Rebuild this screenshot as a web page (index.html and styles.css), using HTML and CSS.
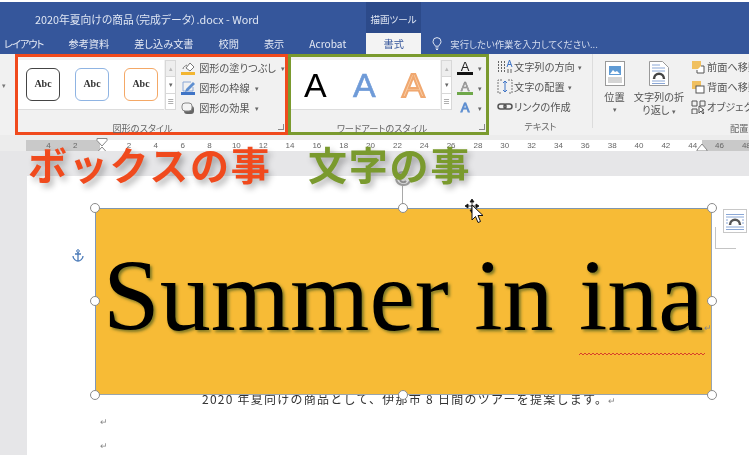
FILE: index.html
```html
<!DOCTYPE html>
<html lang="ja">
<head>
    <meta charset="UTF-8">
    <title>2020年夏向けの商品（完成データ）.docx - Word</title>
    <link rel="stylesheet" href="styles.css">
</head>
<body>
    <div class="window">
        <div class="titlebar">
            <div class="doc-title">2020年夏向けの商品（完成データ）.docx - Word</div>
            <div class="tool-tab">描画ツール</div>
        </div>
        <div class="tabs">
            <span class="tab-first">レイアウト</span>
            <span>参考資料</span>
            <span>差し込み文書</span>
            <span>校閲</span>
            <span>表示</span>
            <span>Acrobat</span>
            <span class="tab-active">書式</span>
            <span class="tell-me">
                <svg width="10" height="13" viewBox="0 0 10 13"><path d="M3.3 9.2C3 7.6 1 6.800 1 4.600a4 4 0 0 1 8 0c0 2.200-2 3-2.300 4.600zM3.500 11h3M4 12.500h2" fill="none" stroke="#dfe6f3" stroke-width="1"/></svg>
                実行したい作業を入力してください...
            </span>
        </div>

        <div class="ribbon">
            <div class="ribbon-left">▾</div>

            <div class="group group-red">
                <div class="group-body">
                    <div class="gallery shape-gallery">
                        <div class="abc abc-black">Abc</div>
                        <div class="abc abc-blue">Abc</div>
                        <div class="abc abc-orange">Abc</div>
                    </div>
                    <div class="gallery-scroll"><i>▴</i><i>▾</i><i>≡</i></div>
                    <div class="commands">
                        <div class="cmd">
                            <svg width="15" height="14" viewBox="0 0 15 14"><path d="M5 7l4-5 4 4-4 4z" fill="#fff" stroke="#777"/><path d="M2 8c0-2 2-3 4-4" fill="none" stroke="#777"/><rect x="0" y="11" width="14" height="3" fill="#f3b632"/></svg>
                            図形の塗りつぶし <em>▾</em>
                        </div>
                        <div class="cmd">
                            <svg width="15" height="14" viewBox="0 0 15 14"><path d="M2 1h8M2 1v9h10V6" fill="none" stroke="#8aa7d6"/><path d="M5 8l7-7 2 2-7 7-3 1z" fill="#5f8fd0"/><rect x="0" y="11" width="14" height="3" fill="#3f74c6"/></svg>
                            図形の枠線 <em>▾</em>
                        </div>
                        <div class="cmd">
                            <svg width="15" height="14" viewBox="0 0 15 14"><rect x="3" y="5" width="10" height="8" rx="3" fill="#666"/><rect x="1" y="2" width="10" height="8" rx="3" fill="#f4f4f4" stroke="#888"/></svg>
                            図形の効果 <em>▾</em>
                        </div>
                    </div>
                </div>
                <div class="group-label">図形のスタイル</div>
                <span class="launcher"></span>
            </div>

            <div class="group group-green">
                <div class="group-body">
                    <div class="gallery art-gallery">
                        <span class="art art-black">A</span>
                        <span class="art art-blue">A</span>
                        <span class="art art-orange">A</span>
                    </div>
                    <div class="gallery-scroll"><i>▴</i><i>▾</i><i>≡</i></div>
                    <div class="commands art-commands">
                        <div class="cmd"><span class="letter letter-black">A</span><em>▾</em></div>
                        <div class="cmd"><span class="letter letter-green">A</span><em>▾</em></div>
                        <div class="cmd"><span class="letter letter-blue">A</span><em>▾</em></div>
                    </div>
                </div>
                <div class="group-label">ワードアートのスタイル</div>
                <span class="launcher"></span>
            </div>

            <div class="group group-text">
                <div class="commands">
                    <div class="cmd">
                        <svg width="16" height="15" viewBox="0 0 16 15"><path d="M1.500 2v11M4.500 2v11M7.500 2v11" stroke="#666" stroke-dasharray="2 1"/><path d="M10 8l2.500-7L15 8M11 5.500h3" fill="none" stroke="#3f74c6"/><path d="M11 10v4M14 10v4" stroke="#666"/></svg>
                        文字列の方向 <em>▾</em>
                    </div>
                    <div class="cmd">
                        <svg width="16" height="15" viewBox="0 0 16 15"><path d="M5 1H1v13h4M11 1h4v13h-4" fill="none" stroke="#777" stroke-dasharray="2 1"/><path d="M8 2v11M6 4l2-2 2 2M6 11l2 2 2-2" fill="none" stroke="#3f74c6"/></svg>
                        文字の配置 <em>▾</em>
                    </div>
                    <div class="cmd">
                        <svg width="16" height="15" viewBox="0 0 16 15"><rect x="1" y="5" width="8" height="5" rx="2.500" fill="none" stroke="#555" stroke-width="1.500"/><rect x="7" y="5" width="8" height="5" rx="2.500" fill="none" stroke="#555" stroke-width="1.500"/></svg>
                        リンクの作成
                    </div>
                </div>
                <div class="group-label">テキスト</div>
            </div>

            <div class="group group-arrange">
                <div class="arrange-body">
                    <div class="big-btn btn-position">
                        <svg width="20" height="25" viewBox="0 0 20 25"><rect x=".5" y=".5" width="19" height="24" fill="#fff" stroke="#999"/><rect x="4" y="5" width="12" height="9" fill="#5f9bd5"/><path d="M5 13l3-4 2 2 2-1 3 3z" fill="#fff"/><path d="M3 17h14M3 19h14M3 21h14" stroke="#aaa"/></svg>
                        <div>位置</div>
                        <em>▾</em>
                    </div>
                    <div class="big-btn btn-wrap">
                        <svg width="20" height="25" viewBox="0 0 20 25"><path d="M.5.500h13l6 6v18H.5z" fill="#fff" stroke="#999"/><path d="M3 4h8M3 7h13M3 10h13M3 20h13M3 22.500h13" stroke="#8aa7d6"/><path d="M5 18c0-7 10-7 10 0" fill="none" stroke="#444" stroke-width="2.500"/></svg>
                        <div>文字列の折<br>り返し <em>▾</em></div>
                    </div>
                    <div class="commands arrange-commands">
                        <div class="cmd">
                            <svg width="15" height="14" viewBox="0 0 15 14"><rect x="1" y="1" width="9" height="8" fill="#f0c060"/><path d="M10 6h3v7H6v-3" fill="#fff" stroke="#555"/></svg>
                            前面へ移動
                        </div>
                        <div class="cmd">
                            <svg width="15" height="14" viewBox="0 0 15 14"><rect x="1" y="1" width="9" height="8" fill="#f0c060"/><rect x="5" y="6" width="8" height="7" fill="#fff" stroke="#555"/></svg>
                            背面へ移動
                        </div>
                        <div class="cmd">
                            <svg width="15" height="14" viewBox="0 0 15 14"><path d="M1 1h5v5H1zM1 9h5v5H1zM9 1h5v5H9z" fill="none" stroke="#555"/><path d="M8 6v7l2-2 2 3 1-1-2-3h2z" fill="#fff" stroke="#555"/></svg>
                            オブジェクトの選択
                        </div>
                    </div>
                </div>
                <div class="group-label">配置</div>
            </div>
        </div>

        <div class="ribbon-gap"></div>

        <div class="ruler">
            <span>4</span><span>2</span><span></span><span>2</span><span>4</span><span>6</span><span>8</span><span>10</span><span>12</span><span>14</span><span>16</span><span>18</span><span>20</span><span>22</span><span>24</span><span>26</span><span>28</span><span>30</span><span>32</span><span>34</span><span>36</span><span>38</span><span>40</span><span>42</span><span>44</span><span>46</span><span>48</span>
            <svg class="indent indent-left" width="12" height="24" viewBox="0 0 12 24"><path d="M1 .500h10v2L6 8 1 2.500z" fill="#fff" stroke="#888"/><path d="M6 9l5 5.500v8H1v-8zM1 15h10" fill="#fff" stroke="#888"/></svg>
            <svg class="indent indent-right" width="12" height="9" viewBox="0 0 12 9"><path d="M6 1l5 6v1H1V7z" fill="#fff" stroke="#888"/></svg>
        </div>

        <div class="workspace">
            <div class="page">
                <p class="body-line">2020 年夏向けの商品として、伊那市 8 日間のツアーを提案します。<span class="ret">↵</span></p>
                <p class="ret-line">↵</p>
                <p class="ret-line">↵</p>
            </div>

            <!-- things floating on the page -->
            <svg class="anchor" width="12" height="13" viewBox="0 0 12 13"><path d="M6 3v9M3 5h6M1 7c0 3 3 5 5 5s5-2 5-5" fill="none" stroke="#4a7ab8" stroke-width="1.300"/><circle cx="6" cy="2" r="1.300" fill="none" stroke="#4a7ab8"/></svg>

            <div class="rotate-line"></div>
            <svg class="rotate-handle" width="24" height="18" viewBox="0 0 24 18"><path d="M5 9a7.500 7.500 0 0 0 14 2M6 6a6 6 0 0 1 10-2" fill="none" stroke="#a9a9a9" stroke-width="2"/><path d="M9 10a3.500 3.500 0 0 0 6 1" fill="none" stroke="#a9a9a9" stroke-width="2"/></svg>

            <div class="shape">
                <div class="shape-text">Summer in ina</div>
                <span class="ret shape-ret">↵</span>
                <svg class="squiggle" width="126" height="4"><defs><pattern id="wave" width="4" height="4" patternUnits="userSpaceOnUse"><path d="M0 3l2-2 2 2" fill="none" stroke="#d8412a" stroke-width="1"/></pattern></defs><rect width="126" height="4" fill="url(#wave)"/></svg>
                <i class="handle h-tl"></i><i class="handle h-tc"></i><i class="handle h-tr"></i>
                <i class="handle h-ml"></i><i class="handle h-mr"></i>
                <i class="handle h-bl"></i><i class="handle h-bc"></i><i class="handle h-br"></i>
            </div>

            <div class="corner-mark"></div>
            <div class="layout-btn">
                <svg width="20" height="18" viewBox="0 0 20 18"><path d="M1 1.500h18M1 4h18M1 14h18M1 16.500h18" stroke="#8aa7d6"/><path d="M1 7h2M17 7h2M1 10h2M17 10h2" stroke="#8aa7d6"/><path d="M5 12c0-7 10-7 10 0" fill="none" stroke="#555" stroke-width="2.500"/></svg>
            </div>

            <svg class="cursor" width="20" height="26" viewBox="0 0 20 26"><path d="M9 0l2 3H7zM9 14l2-3H7zM2 7l3-2v4zM16 7l-3-2v4zM5 7h8M9 3v8" fill="#111" stroke="#111" stroke-width=".8"/><path d="M9 6v15l3.500-3.500 2.500 6 2.500-1-2.500-6H20z" fill="#fff" stroke="#111"/></svg>
        </div>

        <div class="callout callout-red">ボックスの事</div>
        <div class="callout callout-green">文字の事</div>
    </div>
</body>
</html>
```

FILE: styles.css
```css
* {
    box-sizing: border-box;
}

body {
    margin: 0;
    background: #fff;
    font-family: 'Noto Sans CJK JP', 'Noto Sans', sans-serif;
    color: #444;
    overflow: hidden;
}

em {
    font-style: normal;
    font-size: 7px;
    color: #666;
}

.window {
    position: relative;
    width: 749px;
    height: 455px;
    padding-top: 2px;
    display: flex;
    flex-direction: column;
    overflow: hidden;
    filter: blur(.4px);
}

/* title bar */
.titlebar {
    height: 31px;
    flex-shrink: 0;
    background: #35569b;
    color: #dfe6f3;
    font-size: 10.800px;
    font-feature-settings: "palt";
    display: flex;
}

.doc-title {
    padding: 9px 0 0 35px;
    width: 366px;
}

.tool-tab {
    width: 55px;
    background: #2c4a8a;
    padding-top: 10px;
    text-align: center;
    font-size: 9.500px;
}

.tabs {
    height: 21px;
    flex-shrink: 0;
    background: #35569b;
    color: #e4e9f4;
    font-size: 10.200px;
    font-feature-settings: "palt";
    display: flex;
    align-items: center;
    gap: 25px;
    padding-left: 4px;
}

.tab-first {
    letter-spacing: -1px;
}

.tab-active {
    width: 55px;
    height: 21px;
    line-height: 21px;
    margin-left: -5px;
    margin-right: -14px;
    background: #f3f3f3;
    color: #35569b;
    text-align: center;
}

.tell-me {
    display: flex;
    align-items: center;
    gap: 8px;
    font-size: 9.400px;
    color: #d5ddee;
}

/* ribbon */
.ribbon {
    height: 81px;
    flex-shrink: 0;
    background: #f1f1f1;
    display: flex;
    font-size: 10px;
    font-feature-settings: "palt";
}

.ribbon-left {
    flex: 0 0 15px;
    padding: 26px 0 0 2px;
    font-size: 7px;
    color: #777;
}

.group {
    position: relative;
    flex-shrink: 0;
    display: flex;
    flex-direction: column;
}

.group-red {
    width: 273px;
    border: 3px solid #f04a1d;
}

.group-green {
    width: 201px;
    border: 3px solid #7a9a2e;
}

.group-text {
    width: 104px;
    padding: 5px 0 0 3px;
    border-right: 1px solid #dcdcdc;
    margin-bottom: 7px;
}

.group-arrange {
    width: 156px;
    padding: 2px 0 0 11px;
}

.group-body {
    height: 52px;
    margin-top: 3px;
    display: flex;
}

.group-label {
    margin-top: auto;
    margin-bottom: -3px;
    text-align: center;
    font-size: 9.200px;
    line-height: 14px;
    color: #666;
}

.group-red .group-label {
    padding-right: 18px;
}

.group-green .group-label {
    padding-right: 13px;
}

.group-text .group-label {
    margin-bottom: -5px;
    padding-right: 3px;
}

.group-arrange .group-label {
    position: absolute;
    left: 137px;
    bottom: 3px;
}

.launcher {
    position: absolute;
    right: 1px;
    bottom: 2px;
    width: 6px;
    height: 6px;
    border-right: 1px solid #888;
    border-bottom: 1px solid #888;
}

.gallery {
    width: 149px;
    height: 50px;
    background: #fff;
    display: flex;
    align-items: center;
    border-bottom: 1px solid #ddd;
}

.shape-gallery {
    padding-left: 8px;
    gap: 15px;
}

.abc {
    width: 34px;
    height: 33px;
    line-height: 29px;
    border-radius: 6px;
    border: 1.300px solid;
    text-align: center;
    font-family: 'Liberation Serif', serif;
    font-weight: bold;
    font-size: 10px;
    color: #333;
}

.abc-black {
    border-color: #444;
}

.abc-blue {
    border-color: #8fb4e3;
}

.abc-orange {
    border-color: #f4a866;
}

.gallery-scroll {
    width: 11px;
    height: 50px;
    margin-left: 1px;
    display: flex;
    flex-direction: column;
    border: 1px solid #d8d8d8;
    background: #fff;
}

.gallery-scroll i {
    flex: 1;
    font-style: normal;
    font-size: 7px;
    line-height: 15px;
    text-align: center;
    color: #666;
    border-bottom: 1px solid #d8d8d8;
}

.gallery-scroll i:first-child {
    color: #bbb;
    background: #eee;
}

.gallery-scroll i:last-child {
    border-bottom: 0;
}

.commands {
    display: flex;
    flex-direction: column;
    gap: 3px;
    margin-top: -1px;
    padding-left: 5px;
}

.cmd {
    flex-shrink: 0;
    display: flex;
    align-items: center;
    gap: 3px;
    height: 17px;
    white-space: nowrap;
    font-size: 10.200px;
    color: #555;
}

.cmd em {
    margin-left: 2px;
}

.group-text .cmd {
    gap: 1px;
}

/* word art */
.art-gallery {
    padding-left: 13px;
    gap: 27px;
}

.art {
    width: 22px;
    font-family: 'Liberation Sans', sans-serif;
    font-size: 34px;
    line-height: 40px;
}

.art-black {
    color: #000;
}

.art-blue {
    color: #6f9bd8;
    -webkit-text-stroke: .6px #6f9bd8;
}

.art-orange {
    color: #f9cfa8;
    -webkit-text-stroke: 2px #f0a870;
}

.art-commands {
    padding-left: 5px;
}

.letter {
    width: 16px;
    height: 14px;
    line-height: 11px;
    text-align: center;
    font-family: 'Liberation Sans', sans-serif;
    font-size: 13px;
}

.letter-black {
    color: #222;
    border-bottom: 3px solid #111;
}

.letter-green {
    color: #bbb;
    -webkit-text-stroke: .5px #777;
    border-bottom: 3px solid #6fa84a;
}

.letter-blue {
    color: #b9cfee;
    -webkit-text-stroke: 1px #5f8fd0;
    line-height: 14px;
}

/* arrange */
.arrange-body {
    display: flex;
    height: 62px;
}

.big-btn {
    flex-shrink: 0;
    display: flex;
    flex-direction: column;
    align-items: center;
    padding-top: 5px;
    text-align: center;
    font-size: 10.200px;
    line-height: 13px;
    white-space: nowrap;
    color: #555;
}

.big-btn svg {
    margin-bottom: 4px;
}

.btn-position {
    width: 21px;
}

.btn-wrap {
    width: 50px;
    margin-left: 9px;
}

.arrange-commands {
    margin-top: 2px;
    padding-left: 7px;
}

.arrange-commands .cmd {
    gap: 1px;
}

/* ruler */
.ribbon-gap {
    height: 5px;
    flex-shrink: 0;
    background: #ececec;
}

.ruler {
    position: relative;
    height: 11px;
    flex-shrink: 0;
    padding-left: 35px;
    display: flex;
    background: linear-gradient(to right, #ececec 26px, #c9c9c9 26px, #c9c9c9 100px, #fff 100px, #fff 702px, #c9c9c9 702px);
    font-family: 'Liberation Sans', sans-serif;
    font-size: 8px;
    line-height: 11px;
    color: #666;
}

.ruler span {
    flex: 0 0 26.850px;
    text-align: center;
}

.indent {
    position: absolute;
}

.indent-left {
    left: 96px;
    top: -2px;
}

.indent-right {
    left: 696px;
    top: 3px;
}

/* document */
.workspace {
    position: relative;
    flex: 1;
    padding: 25px 0 0 27px;
    background: #e6e6e8;
}

.page {
    height: 100%;
    padding: 215px 0 0 73px;
    background: #fff;
    font-family: 'Noto Sans CJK JP', 'Liberation Serif', serif;
    color: #333;
}

.page p {
    margin: 0;
}

.body-line {
    padding-left: 102px;
    font-size: 12px;
    line-height: 15px;
    letter-spacing: 1.250px;
    white-space: nowrap;
}

.ret {
    color: #888;
    font-size: 9px;
}

.ret-line {
    font-size: 9px;
    line-height: 24px;
    color: #888;
}

.body-line + .ret-line {
    margin-top: 2px;
}

.shape {
    position: absolute;
    left: 95px;
    top: 57px;
    width: 617px;
    height: 187px;
    background: #f7bb36;
    border: 1px solid #9aa5ad;
    border-left-color: #7f97b8;
    border-top-color: #8096ad;
}

.shape-text {
    padding: 29px 0 0 7px;
    font-family: 'Liberation Serif', serif;
    font-size: 102px;
    line-height: 115px;
    white-space: nowrap;
    color: #000;
    text-shadow: 2px 2px 3px rgba(70, 90, 30, .7);
}

.shape-ret {
    position: absolute;
    left: 608px;
    top: 112px;
}

.squiggle {
    position: absolute;
    left: 483px;
    top: 143px;
}

.handle {
    position: absolute;
    width: 10px;
    height: 10px;
    border-radius: 50%;
    background: #fff;
    border: 1.500px solid #8b8b8b;
}

.h-tl { left: -6px; top: -6px; }
.h-tc { left: 302px; top: -6px; }
.h-tr { right: -6px; top: -6px; }
.h-ml { left: -6px; top: 87px; }
.h-mr { right: -6px; top: 87px; }
.h-bl { left: -6px; bottom: -6px; }
.h-bc { left: 302px; bottom: -6px; }
.h-br { right: -6px; bottom: -6px; }

.anchor {
    position: absolute;
    left: 72px;
    top: 98px;
}

.rotate-line {
    position: absolute;
    left: 402px;
    top: 35px;
    width: 1px;
    height: 22px;
    background: #a9a9a9;
}

.rotate-handle {
    position: absolute;
    left: 391px;
    top: 19px;
}

.corner-mark {
    position: absolute;
    left: 715px;
    top: 76px;
    width: 21px;
    height: 22px;
    border-left: 1px solid #c4c4c4;
    border-bottom: 1px solid #c4c4c4;
}

.layout-btn {
    position: absolute;
    left: 723px;
    top: 58px;
    width: 24px;
    height: 24px;
    padding: 2px 1px;
    background: #fff;
    border: 1px solid #c8c8c8;
}

.cursor {
    position: absolute;
    left: 463px;
    top: 48px;
}

/* big notes typed over the screen */
.callout {
    position: absolute;
    top: 142px;
    font-weight: bold;
    font-size: 39px;
    line-height: 42px;
    letter-spacing: 1.800px;
    white-space: nowrap;
    text-shadow: 3px 4px 6px rgba(0, 0, 0, .3);
}

.callout-red {
    left: 28px;
    color: #f04a1d;
}

.callout-green {
    left: 308px;
    color: #7a9a2e;
}
```
